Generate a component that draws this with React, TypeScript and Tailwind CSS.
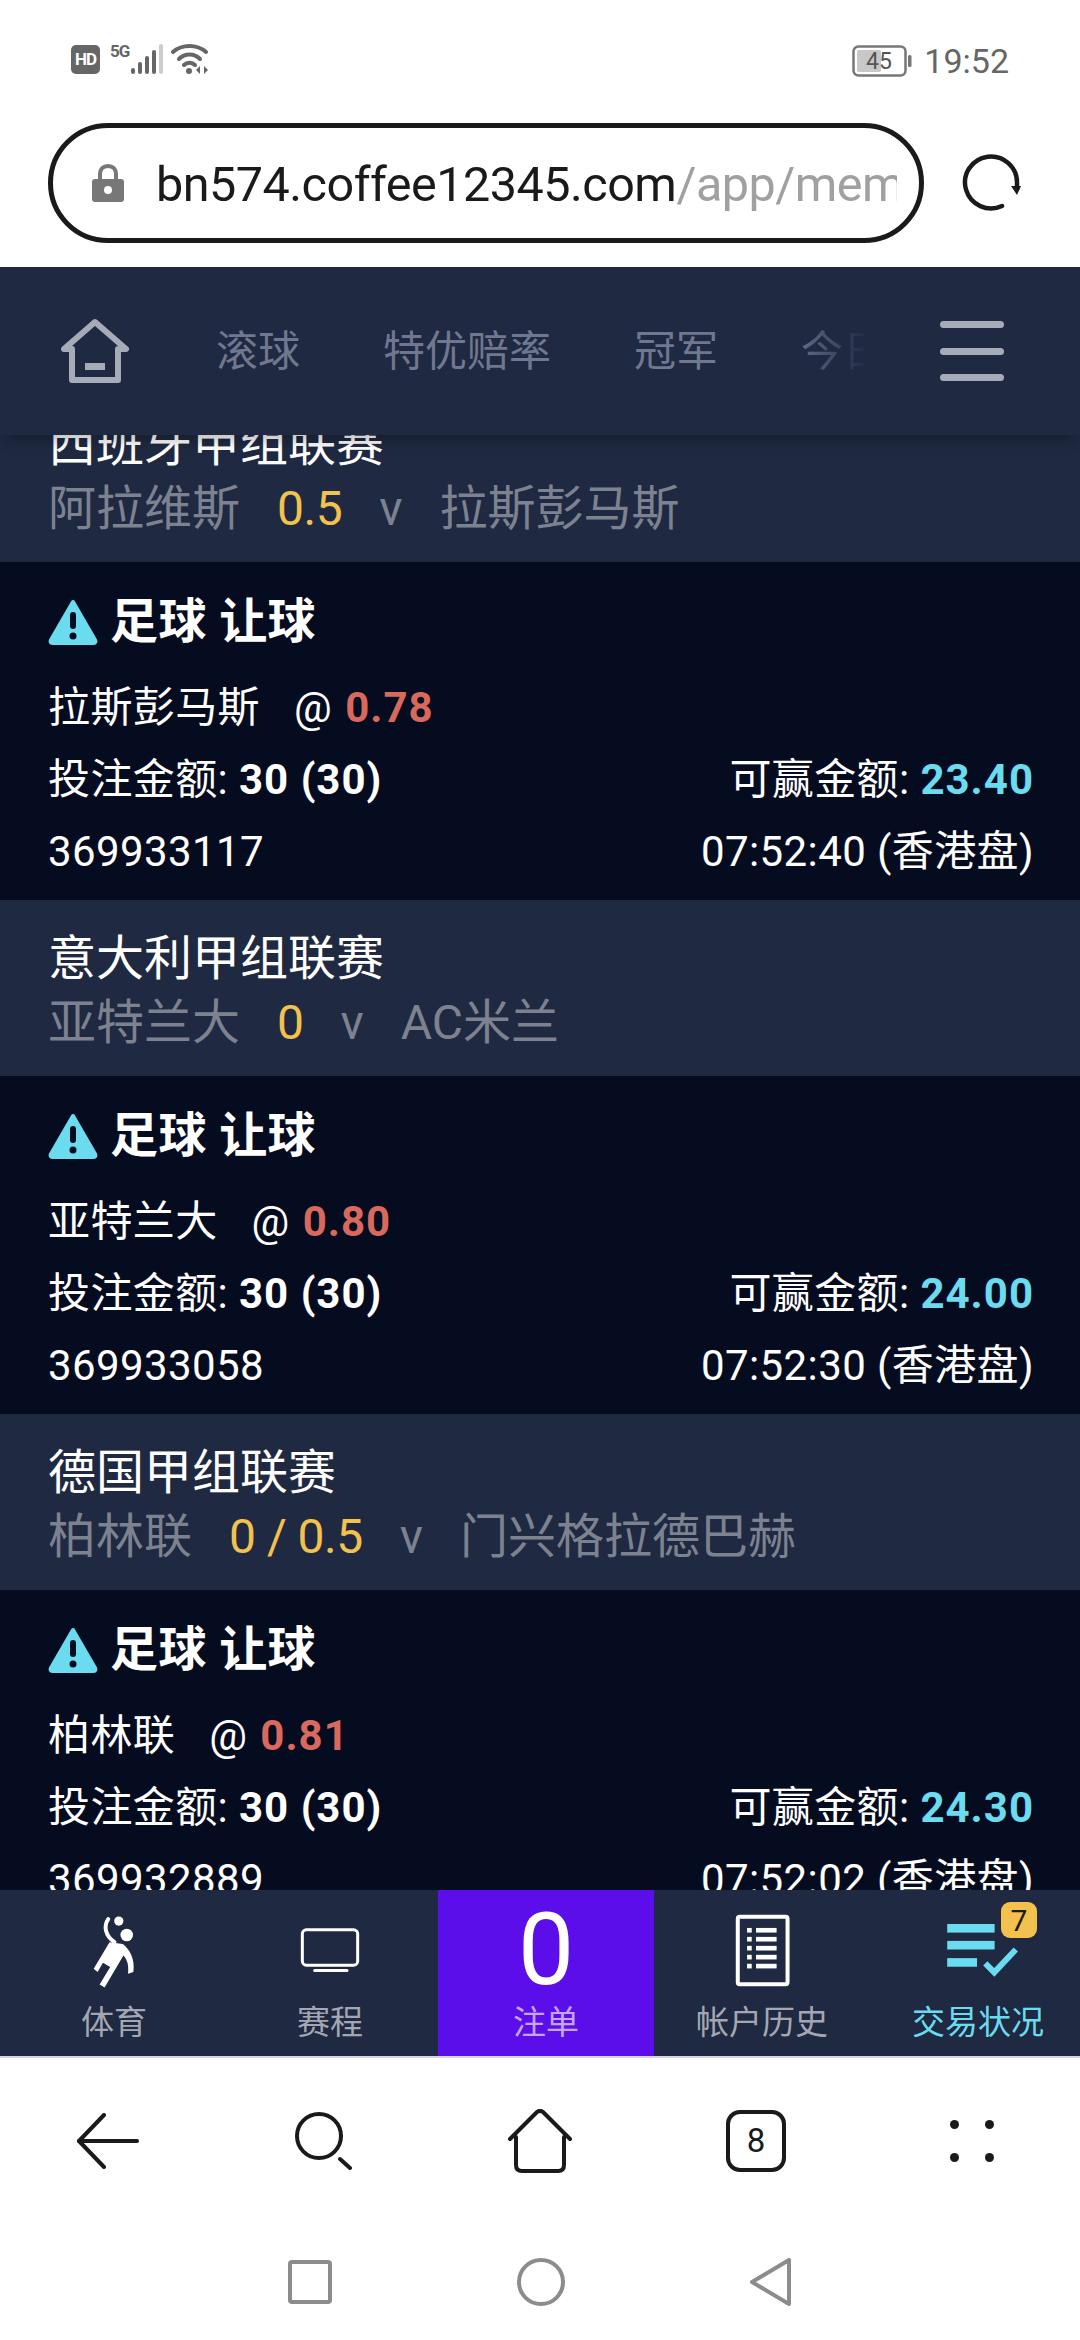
const FONT = "font-['Roboto','Noto_Sans_CJK_SC',sans-serif]";

const NAV = ["滚球", "特优赔率", "冠军", "今日"];

const BETS = [
  { league: "意大利甲组联赛", home: "亚特兰大", line: "0", away: "AC米兰", pick: "亚特兰大", odds: "0.80", win: "24.00", id: "369933058", time: "07:52:30" },
  { league: "德国甲组联赛", home: "柏林联", line: "0 / 0.5", away: "门兴格拉德巴赫", pick: "柏林联", odds: "0.81", win: "24.30", id: "369932889", time: "07:52:02" },
];

function SignalIcons() {
  return (
    <div className="flex items-start">
      <span className="flex h-[29px] w-[29px] items-center justify-center rounded-[5px] bg-[#666] text-[17px] font-bold tracking-[-1px] text-white">HD</span>
      <span className="ml-[10px] mt-[-3px] text-[17px] font-bold leading-[18px] tracking-[-1px] text-[#666]">5G</span>
      <svg className="ml-[1px] mt-[-1px]" width="35" height="31" viewBox="0 0 35 31">
        <rect x="1" y="24" width="4" height="6" rx="2" fill="#666" />
        <rect x="8" y="18" width="4" height="12" rx="2" fill="#666" />
        <rect x="15" y="12" width="4" height="18" rx="2" fill="#666" />
        <rect x="22" y="6" width="4" height="24" rx="2" fill="#666" />
        <rect x="29" y="0" width="4" height="30" rx="2" fill="#ccc" />
      </svg>
      <svg className="ml-[6px] mt-[-2px]" width="38" height="32" viewBox="0 0 38 32" fill="none" stroke="#666" strokeWidth="4" strokeLinecap="round">
        <path d="M2 9C11 1 26 1 35 9" />
        <path d="M8 16C14 10 23 10 29 16" />
        <path d="M13 22C16 19 21 19 24 22" />
        <circle cx="18" cy="28" r="3" fill="#666" stroke="none" />
        <path d="M29 23l-4 4 4 4z M33 23l4 4-4 4z" fill="#666" stroke="none" />
      </svg>
    </div>
  );
}

function Battery() {
  return (
    <svg width="60" height="32" viewBox="0 0 60 32">
      <rect x="1.500" y="1.500" width="52" height="29" rx="5" fill="#fff" stroke="#777" strokeWidth="2.500" />
      <rect x="5" y="5" width="24" height="22" rx="2" fill="#c8c8c8" />
      <rect x="56" y="10" width="3.500" height="12" rx="1.500" fill="#777" />
      <text x="27" y="24" textAnchor="middle" fontSize="23" fill="#555" fontFamily="Roboto">45</text>
    </svg>
  );
}

function HomeOutline() {
  return (
    <svg width="70" height="66" viewBox="0 0 70 66" fill="none" stroke="#a6abb8" strokeWidth="6" strokeLinejoin="round">
      <path d="M4 31L35 4L66 31H58V62H12V31Z" />
      <rect x="25" y="45" width="20" height="7" fill="#a6abb8" stroke="none" />
    </svg>
  );
}

function AlertIcon() {
  return (
    <svg width="50" height="46" viewBox="0 0 50 46">
      <path d="M25 3L47 41C48 43 47 44 45 44H5C3 44 2 43 3 41Z" fill="#6bdcf0" stroke="#6bdcf0" strokeWidth="4" strokeLinejoin="round" />
      <rect x="22" y="13" width="6" height="17" rx="3" fill="#060c20" />
      <circle cx="25" cy="37" r="3.500" fill="#060c20" />
    </svg>
  );
}

function LeagueRow({ league, home, line, away, clipped }: { league: string; home: string; line: string; away: string; clipped?: boolean }) {
  return (
    <div className={`h-[176px] bg-[#1f2941] px-[48px] pt-[23px] ${clipped ? "mt-[-49px]" : ""}`}>
      <div className="h-[72px] text-[48px] leading-[72px] text-white">{league}</div>
      <div className="mt-[2px] flex h-[52px] items-center text-[48px] leading-[52px] text-[#7c8290]">
        <span>{home}</span>
        <span className="ml-[37px] tracking-[-0.5px] text-[#f2c14e]">{line}</span>
        <span className="ml-[37px]">v</span>
        <span className="ml-[37px]">{away}</span>
      </div>
    </div>
  );
}

function BetCard({ pick, odds, win, id, time }: { pick: string; odds: string; win: string; id: string; time: string }) {
  return (
    <div className="h-[338px] bg-[#060c20] pl-[48px] pr-[46px] pt-[24px] text-[42px] tracking-[0.4px] text-white">
      <div className="flex h-[72px] items-center gap-[12px]">
        <AlertIcon />
        <span className="text-[48px] font-bold">足球 让球</span>
      </div>
      <div className="mt-[13px] flex h-[72px] items-center">
        <span>{pick}</span>
        <span className="ml-[34px]">@</span>
        <span className="ml-[13px] font-bold tracking-[1px] text-[#d9695c]">{odds}</span>
      </div>
      <div className="flex h-[72px] items-center justify-between">
        <span>投注金额: <b className="tracking-[1px]">30 (30)</b></span>
        <span>可赢金额: <b className="tracking-[1px] text-[#6bdcf0]">{win}</b></span>
      </div>
      <div className="flex h-[72px] items-center justify-between">
        <span>{id}</span>
        <span>{time} (香港盘)</span>
      </div>
    </div>
  );
}

function PersonIcon() {
  return (
    <svg width="43" height="77" viewBox="100 60 130 230" fill="#fff">
      <circle cx="178" cy="86" r="14" />
      <circle cx="202" cy="128" r="19" />
      <path d="M146 80C132 100 136 130 165 150" fill="none" stroke="#fff" strokeWidth="12" strokeLinecap="round" />
      <path d="M150 150L190 155C210 170 228 200 222 240L206 245C208 220 205 205 192 190L135 287L120 278L152 225L130 212L114 240L102 230Z" />
    </svg>
  );
}

function TvIcon() {
  return (
    <svg width="60" height="47" viewBox="720 110 180 140" fill="none" stroke="#fff" strokeWidth="9" strokeLinecap="round">
      <rect x="727" y="118" width="166" height="106" rx="12" />
      <path d="M764 240H861" />
    </svg>
  );
}

function HistoryIcon() {
  return (
    <svg width="55" height="73" viewBox="100 70 165 220" fill="#fff">
      <rect x="108" y="78" width="150" height="204" rx="6" fill="none" stroke="#fff" strokeWidth="12" />
      {[112, 139, 166, 193, 220].map((y) => (
        <g key={y}>
          <rect x="136" y={y} width="14" height="14" />
          <rect x="163" y={y} width="62" height="14" />
        </g>
      ))}
    </svg>
  );
}

function StatusIcon() {
  return (
    <svg className="ml-[10px]" width="75" height="58" viewBox="720 90 225 175" fill="#6bdcf0">
      <rect x="723" y="99" width="143" height="26" />
      <rect x="723" y="150" width="143" height="26" />
      <rect x="723" y="202" width="90" height="26" />
      <path d="M838 218L865 245L930 176" fill="none" stroke="#6bdcf0" strokeWidth="18" />
    </svg>
  );
}

function Tab({ label, icon, active, badge }: { label: string; icon: React.ReactNode; active?: boolean; badge?: string }) {
  return (
    <div className="relative flex w-[216px] shrink-0 flex-col items-center pt-[10px]">
      <div className="flex h-[100px] items-center justify-center">{icon}</div>
      <div className={`mt-[3px] flex h-[40px] items-center text-[33px] ${active ? "text-[#6bdcf0]" : "text-[#a3a7b3]"}`}>{label}</div>
      {badge && (
        <span className="absolute left-[131px] top-[12px] flex h-[36px] w-[36px] items-center justify-center rounded-[9px] bg-[#f2c14e] text-[30px] text-[#1a1a1a]">{badge}</span>
      )}
    </div>
  );
}

function ToolbarIcons() {
  const stroke = "#1a1a1a";
  return (
    <div className="flex h-[166px] items-center">
      <div className="flex w-[216px] justify-center">
        <svg width="62" height="56" viewBox="0 0 62 56" fill="none" stroke={stroke} strokeWidth="4" strokeLinecap="round" strokeLinejoin="round">
          <path d="M27 2L2 28L27 54" />
          <path d="M2 28H60" />
        </svg>
      </div>
      <div className="flex w-[216px] justify-center">
        <svg width="58" height="58" viewBox="0 0 58 58" fill="none" stroke={stroke} strokeWidth="4" strokeLinecap="round">
          <circle cx="24" cy="24" r="22" />
          <path d="M45 47L55 56" />
        </svg>
      </div>
      <div className="flex w-[216px] justify-center">
        <svg width="66" height="64" viewBox="0 0 66 64" fill="none" stroke={stroke} strokeWidth="4" strokeLinecap="round" strokeLinejoin="round">
          <path d="M3 30L30 3C32 1.500 34 1.500 36 3L63 30" />
          <path d="M9 28V56C9 60 11 62 15 62H51C55 62 57 60 57 56V28" />
        </svg>
      </div>
      <div className="flex w-[216px] justify-center">
        <div className="flex h-[62px] w-[60px] items-center justify-center rounded-[14px] border-[4px] border-[#1a1a1a] text-[33px] text-[#1a1a1a]">8</div>
      </div>
      <div className="flex w-[216px] justify-center">
        <div className="grid grid-cols-2 gap-x-[26px] gap-y-[24px]">
          <span className="h-[9px] w-[9px] rounded-full bg-[#1a1a1a]" />
          <span className="h-[9px] w-[9px] rounded-full bg-[#1a1a1a]" />
          <span className="h-[9px] w-[9px] rounded-full bg-[#1a1a1a]" />
          <span className="h-[9px] w-[9px] rounded-full bg-[#1a1a1a]" />
        </div>
      </div>
    </div>
  );
}

export default function App() {
  return (
    <div className={`flex h-[2340px] w-[1080px] flex-col overflow-hidden bg-white ${FONT}`}>
      {/* status bar */}
      <div className="flex h-[123px] shrink-0 justify-between pl-[71px] pr-[71px] pt-[45px]">
        <SignalIcons />
        <div className="flex h-[32px] items-center gap-[12px] text-[34px] text-[#666]">
          <Battery />
          <span>19:52</span>
        </div>
      </div>

      {/* address bar */}
      <div className="flex h-[144px] shrink-0 items-start pl-[48px]">
        <div className="flex h-[120px] w-[876px] items-center overflow-hidden rounded-[60px] border-[5px] border-[#1a1a1a] pl-[39px] pr-[22px]">
          <svg className="shrink-0" width="32" height="38" viewBox="0 0 32 38">
            <path d="M8 16V10C8 5 11 2 16 2C21 2 24 5 24 10V16" fill="none" stroke="#777" strokeWidth="4" />
            <rect x="0" y="15" width="32" height="23" rx="3" fill="#777" />
            <circle cx="16" cy="26" r="4" fill="#fff" />
          </svg>
          <div className="ml-[32px] overflow-hidden whitespace-nowrap pt-[4px] text-[48.500px] leading-[60px] tracking-[-0.5px] text-[#1a1a1a]">
            bn574.coffee12345.com<span className="text-[#a0a0a0]">/app/member</span>
          </div>
        </div>
        <svg className="ml-[38px] mt-[30px]" width="60" height="60" viewBox="0 0 60 60" fill="none" stroke="#1a1a1a" strokeWidth="4.500" strokeLinecap="round">
          <path d="M40 53A26 26 0 1 1 55 30V36" />
          <path d="M49 33L55 42L59 33Z" fill="#1a1a1a" stroke="none" />
        </svg>
      </div>

      {/* league nav */}
      <div className="relative z-10 flex h-[168px] shrink-0 items-center bg-[#1f2941] shadow-[0_12px_12px_-6px_rgba(0,0,0,0.25)]">
        <div className="ml-[60px] shrink-0"><HomeOutline /></div>
        <div className="relative ml-[86px] flex w-[651px] shrink-0 gap-[83px] overflow-hidden whitespace-nowrap text-[42px] text-[#6f7890]">
          {NAV.map((n) => (
            <span key={n}>{n}</span>
          ))}
          <span className="absolute right-0 top-0 h-full w-[80px] bg-gradient-to-r from-transparent to-[#1f2941]" />
        </div>
        <div className="ml-[73px] flex h-[60px] w-[64px] shrink-0 flex-col justify-between">
          <span className="h-[7px] rounded-full bg-[#a6abb8]" />
          <span className="h-[7px] rounded-full bg-[#a6abb8]" />
          <span className="h-[7px] rounded-full bg-[#a6abb8]" />
        </div>
      </div>

      {/* bet list */}
      <div className="min-h-0 flex-1 overflow-hidden bg-[#060c20]">
        <LeagueRow clipped league="西班牙甲组联赛" home="阿拉维斯" line="0.5" away="拉斯彭马斯" />
        <BetCard pick="拉斯彭马斯" odds="0.78" win="23.40" id="369933117" time="07:52:40" />
        {BETS.map((b) => (
          <div key={b.id}>
            <LeagueRow league={b.league} home={b.home} line={b.line} away={b.away} />
            <BetCard pick={b.pick} odds={b.odds} win={b.win} id={b.id} time={b.time} />
          </div>
        ))}
      </div>

      {/* bottom tabs */}
      <div className="flex h-[166px] shrink-0 overflow-hidden bg-[#1f2941] pl-[6px]">
        <Tab label="体育" icon={<PersonIcon />} />
        <Tab label="赛程" icon={<TvIcon />} />
        <div className="flex w-[216px] shrink-0 flex-col items-center bg-[#5b0eea] pt-[10px]">
          <div className="flex h-[100px] items-center text-[100px] leading-[100px] text-white">0</div>
          <div className="mt-[3px] flex h-[40px] items-center text-[33px] text-[#c4a6f5]">注单</div>
        </div>
        <Tab label="帐户历史" icon={<HistoryIcon />} />
        <Tab label="交易状况" icon={<StatusIcon />} active badge="7" />
      </div>

      {/* browser toolbar */}
      <div className="shrink-0 border-t-[2px] border-[#d4d4dc]">
        <ToolbarIcons />
      </div>

      {/* system nav */}
      <div className="flex h-[116px] shrink-0 items-center justify-center gap-[185px]">
        <svg width="44" height="44" viewBox="0 0 44 44" fill="none" stroke="#8c8c8c" strokeWidth="4">
          <rect x="2" y="2" width="40" height="40" rx="2" />
        </svg>
        <svg width="48" height="48" viewBox="0 0 48 48" fill="none" stroke="#8c8c8c" strokeWidth="4">
          <circle cx="24" cy="24" r="22" />
        </svg>
        <svg width="42" height="48" viewBox="0 0 42 48" fill="none" stroke="#8c8c8c" strokeWidth="4" strokeLinejoin="round">
          <path d="M39 2V46L2 24Z" />
        </svg>
      </div>
    </div>
  );
}
